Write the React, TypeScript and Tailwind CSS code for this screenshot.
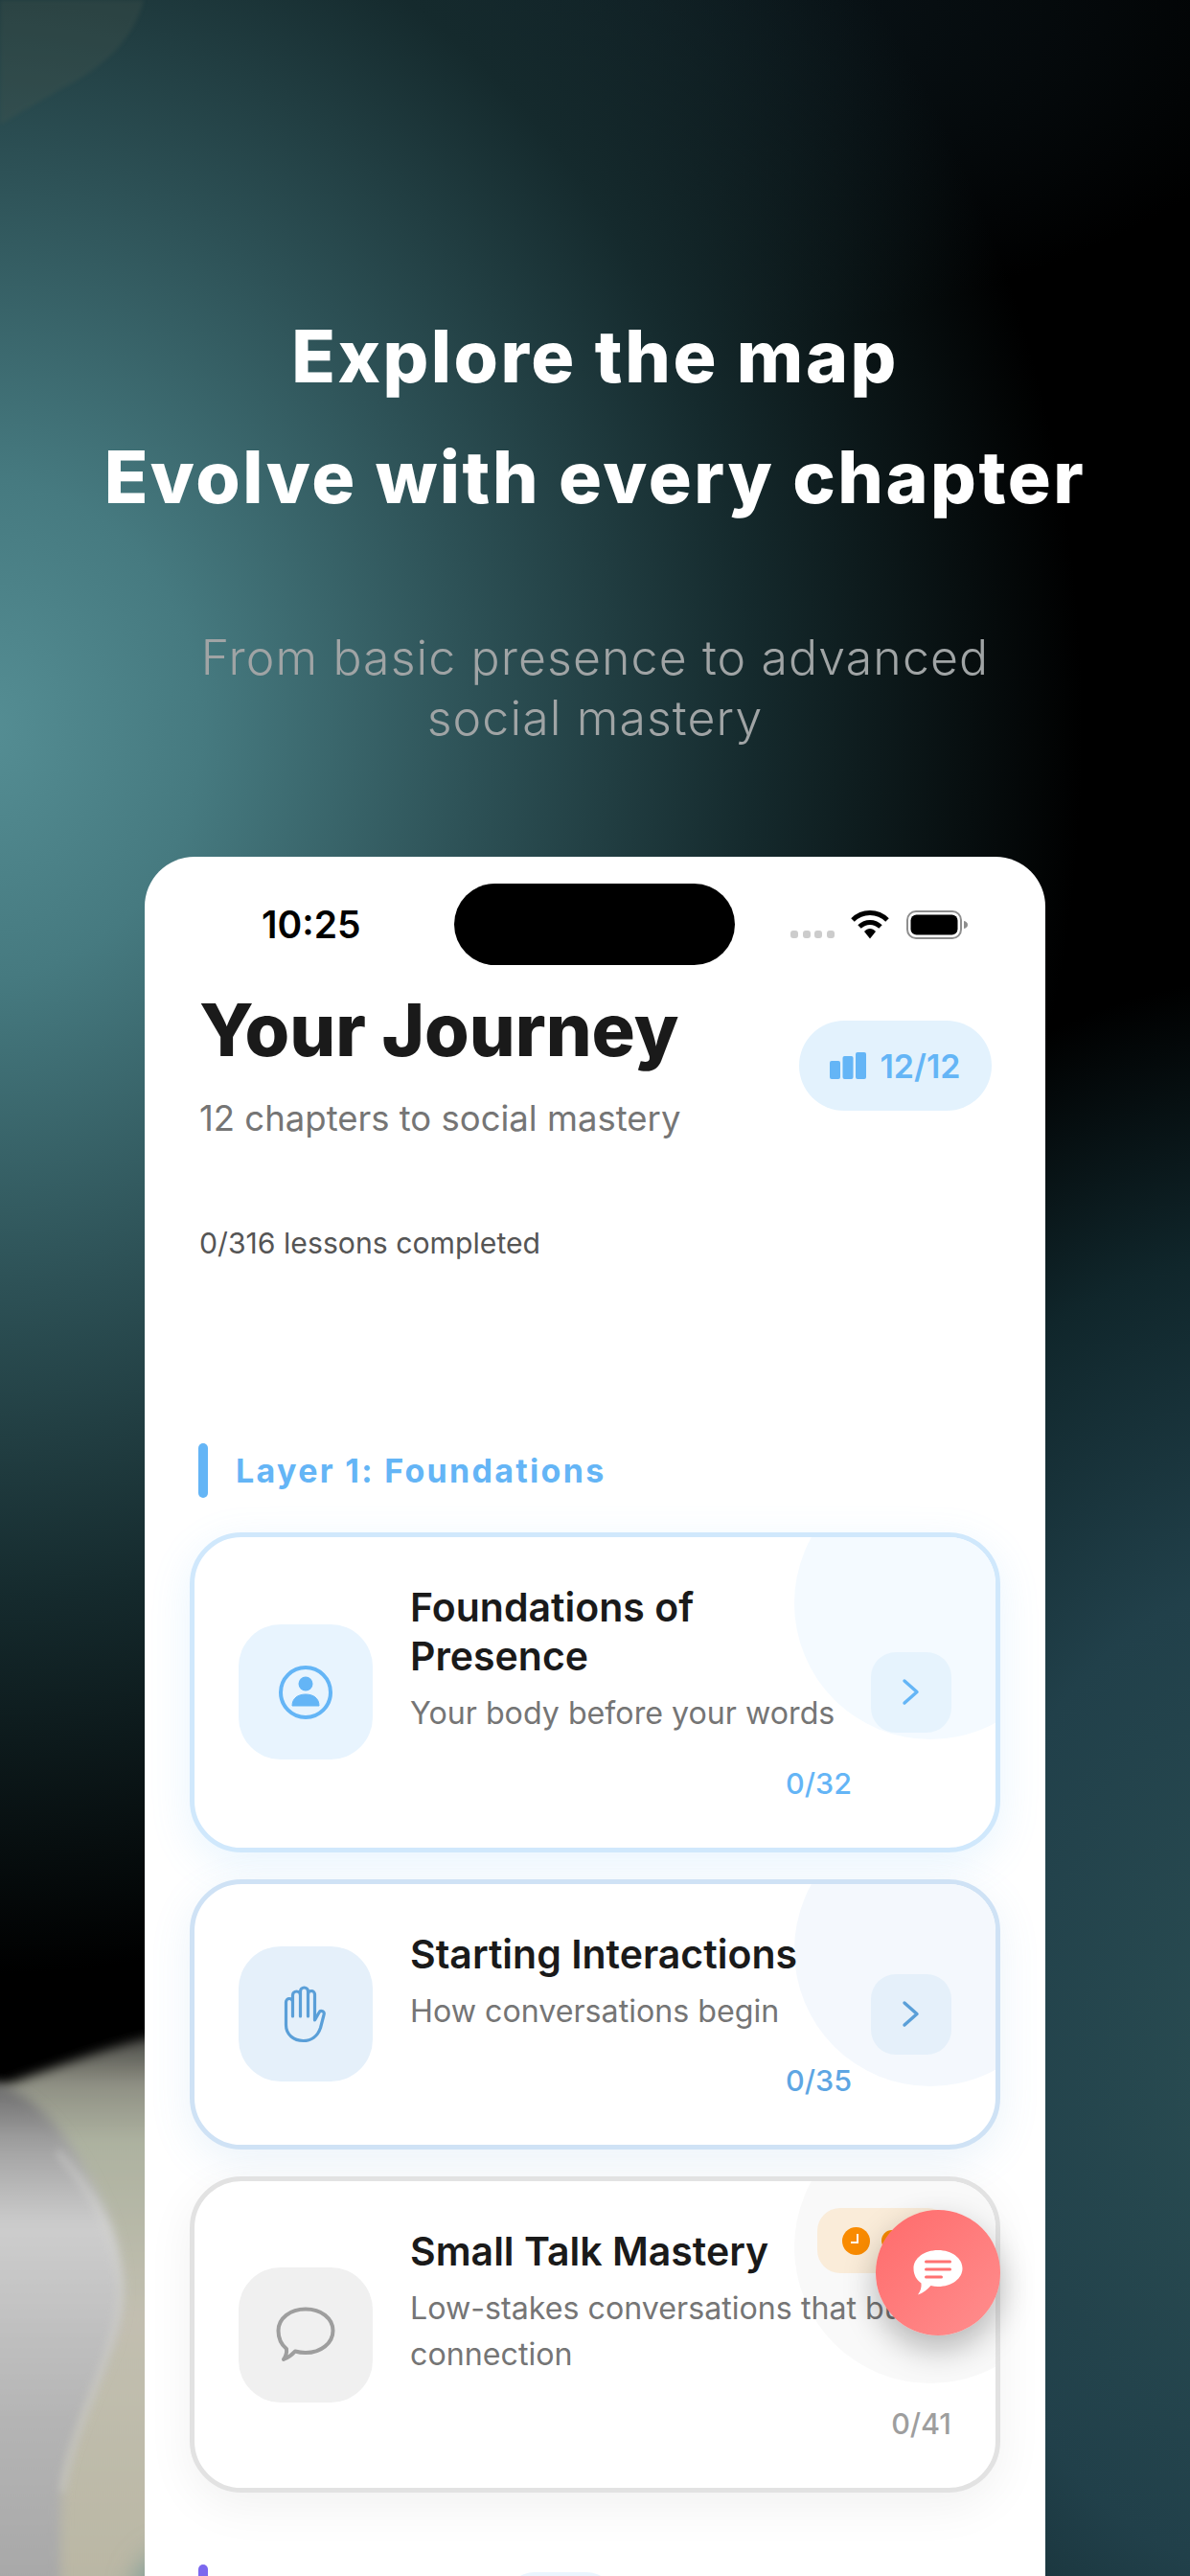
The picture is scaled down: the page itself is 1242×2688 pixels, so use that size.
import React from "react";

const Person = () => (
  <svg width="60" height="60" viewBox="0 0 60 60">
    <circle cx="30" cy="30" r="26" fill="none" stroke="#64b5f6" strokeWidth="4" />
    <circle cx="30" cy="21" r="7.5" fill="#64b5f6" />
    <path d="M16 44c0-8 6-12 14-12s14 4 14 12z" fill="#64b5f6" strokeLinejoin="round" stroke="#64b5f6" strokeWidth="1" />
  </svg>
);

const HandIcon = () => (
  <svg width="49" height="62" viewBox="0 0 49 62">
    <g transform="translate(1.5 2)" fill="none" stroke="#5a9fd8" strokeWidth="3.2" strokeLinecap="round" strokeLinejoin="round">
      <path d="M2 40V16a3.5 3.5 0 0 1 7 0V9a4 4 0 0 1 8 0V5a4 4 0 0 1 8 0V8a3.5 3.5 0 0 1 7 0V35l4.5-8c1.6-3 6.6-1 5 2.5L38 43C35 52 28 56.5 20 56.5 10 56.5 2 50 2 40z" />
      <path d="M9 16V31M17 9V31M25 8V31" />
    </g>
  </svg>
);

const Bubble = () => (
  <svg width="62" height="58" viewBox="0 0 62 58">
    <path d="M11 44C5 39 2.500 32 2.500 25 2.500 12 15 2.500 31 2.500S59.500 12 59.500 25 47 48 31 48C27 48 23.500 47.500 20 46.500 17 50 13 53 8 55 10.500 51.500 11.500 48 11 44z" fill="none" stroke="#9e9e9e" strokeWidth="4" strokeLinejoin="round" />
  </svg>
);

const Chevron = ({ color }: { color: string }) => (
  <svg width="20" height="29" viewBox="0 0 20 29">
    <path d="M3 3l13 11.500L3 26" fill="none" stroke={color} strokeWidth="3.4" strokeLinecap="round" strokeLinejoin="round" />
  </svg>
);

function Background() {
  return (
    <svg className="absolute inset-0" width="1242" height="2688" viewBox="0 0 1242 2688">
      <defs>
        <filter id="b14" x="-40%" y="-40%" width="180%" height="180%"><feGaussianBlur stdDeviation="14" /></filter>
        <filter id="b7" x="-40%" y="-40%" width="180%" height="180%"><feGaussianBlur stdDeviation="6" /></filter>
        <filter id="b2" x="-20%" y="-20%" width="140%" height="140%"><feGaussianBlur stdDeviation="2" /></filter>
        <filter id="b4" x="-40%" y="-20%" width="180%" height="140%"><feGaussianBlur stdDeviation="4" /></filter>
        <linearGradient id="gr" x1="0" y1="0" x2="0" y2="1">
          <stop offset="0" stopColor="#666666" />
          <stop offset="0.12" stopColor="#a0a0a0" />
          <stop offset="0.28" stopColor="#cdcdcd" />
          <stop offset="0.65" stopColor="#b4b4b4" />
          <stop offset="1" stopColor="#a6a6a6" />
        </linearGradient>
        <linearGradient id="be" x1="0" y1="0" x2="0" y2="1">
          <stop offset="0" stopColor="#3a3a38" />
          <stop offset="0.1" stopColor="#8f9084" />
          <stop offset="0.2" stopColor="#adb2a0" />
          <stop offset="0.5" stopColor="#c2bfb0" />
          <stop offset="1" stopColor="#b9b6a3" />
        </linearGradient>
      </defs>
      <path d="M0 0H150C140 40 110 70 60 95L0 130z" fill="#46564e" opacity="0.3" filter="url(#b2)" />
      <path d="M-40 2190C30 2170 90 2140 200 2115V2720H-40z" fill="url(#be)" filter="url(#b7)" />
      <path d="M-30 2170C30 2170 70 2225 95 2275 120 2320 135 2370 125 2420 115 2470 75 2530 65 2600 62 2640 65 2670 62 2720H-30z" fill="url(#gr)" filter="url(#b7)" />
      <path d="M60 2245C85 2275 120 2320 125 2390 125 2450 75 2530 65 2600" fill="none" stroke="#d9d9d6" strokeWidth="6" filter="url(#b4)" opacity="0.45" />
      <circle cx="185" cy="2705" r="45" fill="#7f9e98" filter="url(#b14)" />
    </svg>
  );
}

type CardProps = {
  icon: React.ReactNode;
  title: string;
  desc: string;
  count: string;
  chevron?: string;
  border: string;
  shadow: string;
  circle: string;
  tile: string;
  countColor: string;
  arrowTile?: string;
  badge?: boolean;
};

function Card(p: CardProps) {
  return (
    <div className={`relative rounded-[54px] border-[5px] bg-white ${p.border} ${p.shadow}`}>
      <div className="absolute inset-0 overflow-hidden rounded-[49px]">
        <div className={`absolute -top-[73px] -right-[74px] h-[284px] w-[284px] rounded-full ${p.circle}`} />
      </div>
      {p.badge && (
        <div className="absolute top-[28px] right-[47px] flex h-[68px] w-[139px] items-center gap-[12px] rounded-[24px] bg-[#faecd9] pl-[26px]">
          <svg width="29" height="29" viewBox="0 0 29 29">
            <circle cx="14.500" cy="14.500" r="14.500" fill="#f98b00" />
            <path d="M16 7v9H9" fill="none" stroke="#fff" strokeWidth="2" />
          </svg>
          <div className="h-[22px] w-[22px] rounded-full bg-[#f98b00]" />
        </div>
      )}
      <div className="relative flex items-center py-[48px] pr-[46px] pl-[46px]">
        <div className={`flex h-[141px] w-[140px] shrink-0 items-center justify-center rounded-[44px] ${p.tile}`}>{p.icon}</div>
        <div className="ml-[39px] flex min-w-0 flex-1 flex-col">
          <div className="text-[41px] leading-[51px] font-semibold text-[#1a1a1a]">{p.title}</div>
          <div className="mt-[10px] text-[32.200px] leading-[47.500px] text-[#757575]">{p.desc}</div>
          <div className={`mt-[30px] text-right text-[30.500px] leading-[38px] font-medium ${p.countColor}`}>{p.count}</div>
        </div>
        {p.chevron && (
          <div className={`ml-[20px] flex h-[84px] w-[84px] shrink-0 items-center justify-center rounded-[26px] ${p.arrowTile}`}>
            <Chevron color={p.chevron} />
          </div>
        )}
      </div>
    </div>
  );
}

export default function App() {
  return (
    <div className="relative h-[2688px] w-[1242px] overflow-hidden bg-black bg-[radial-gradient(ellipse_1150px_1300px_at_-20px_760px,#558e94_0%,#467a80_20%,#2d5156_45%,#152a2d_70%,transparent_100%),radial-gradient(ellipse_1100px_400px_at_300px_0px,#12242c_0%,transparent_100%),radial-gradient(ellipse_760px_1150px_at_1330px_2170px,#2a4d52_0%,#21404a_45%,#10262b_75%,transparent_100%),linear-gradient(to_top,#1b3644_0%,transparent_5%)] [font-family:Inter,sans-serif]">
      <Background />
      <div className="relative flex flex-col items-center pt-[309px]">
        <h1 className="text-center text-[75px] leading-[126px] font-extrabold tracking-[2.500px] text-white">
          <div>Explore the map</div>
          <div>Evolve with every chapter</div>
        </h1>
        <p className="mt-[94px] text-center text-[50px] leading-[63px] font-light tracking-[1.100px] text-[#a0a4a5]">
          From basic presence to advanced
          <br />
          social mastery
        </p>
        <div className="relative mt-[113px] h-[1795px] w-[940px] overflow-hidden rounded-t-[52px] bg-white">
          <div className="flex items-center pt-[28px] pl-[122px]">
            <div className="w-[201px] text-[39px] leading-[85px] font-semibold text-black">10:25</div>
            <div className="h-[85px] w-[293px] rounded-full bg-black" />
            <div className="ml-[58px] flex h-[30px] items-center">
              <div className="mt-[20px] flex gap-[4.500px]">
                <div className="h-[8px] w-[8px] rounded-[3px] bg-[#cccccc]" />
                <div className="h-[8px] w-[8px] rounded-[3px] bg-[#cccccc]" />
                <div className="h-[8px] w-[8px] rounded-[3px] bg-[#cccccc]" />
                <div className="h-[8px] w-[8px] rounded-[3px] bg-[#cccccc]" />
              </div>
              <svg className="ml-[17px]" width="40" height="30" viewBox="0 0 40 30">
                <path d="M2 10C12 0 28 0 38 10" fill="none" stroke="#000" strokeWidth="5" />
                <path d="M9 17c6.500-6 15.500-6 22 0" fill="none" stroke="#000" strokeWidth="5" />
                <path d="M14 22c3.500-4 8.500-4 12 0l-6 7.500z" fill="#000" />
              </svg>
              <svg className="ml-[18px]" width="65" height="30" viewBox="0 0 65 30">
                <rect x="1" y="1" width="56" height="28" rx="9" fill="none" stroke="#8e8e8e" strokeWidth="2" />
                <rect x="4.500" y="4.500" width="49" height="21" rx="6" fill="#000" />
                <path d="M60 11c2.500.5 4 2 4 4s-1.500 3.500-4 4z" fill="#8e8e8e" />
              </svg>
            </div>
          </div>

          <div className="flex items-start justify-between pt-[28px] pr-[56px] pl-[57px]">
            <div>
              <div className="text-[75.500px] leading-[80px] font-extrabold text-[#1a1a1a]">Your Journey</div>
              <div className="mt-[30px] text-[36.500px] leading-[44px] text-[#757575]">12 chapters to social mastery</div>
            </div>
            <div className="mt-[30px] flex h-[94px] w-[201px] items-center justify-center gap-[14px] rounded-full bg-[#e3f2fd]">
              <svg width="38" height="28" viewBox="0 0 38 28">
                <rect x="0" y="9" width="11" height="19" rx="2" fill="#64b5f6" />
                <rect x="13.500" y="4" width="11" height="24" rx="2" fill="#64b5f6" />
                <rect x="27" y="0" width="11" height="28" rx="2" fill="#64b5f6" />
              </svg>
              <span className="text-[34px] font-semibold text-[#64b5f6]">12/12</span>
            </div>
          </div>

          <div className="mt-[88px] pl-[57px] text-[30.200px] leading-[40px] text-[#555555]">0/316 lessons completed</div>

          <div className="mt-[189px] flex items-center pl-[56px]">
            <div className="h-[57px] w-[10px] rounded-full bg-[#64b5f6]" />
            <div className="ml-[29px] text-[34px] font-bold tracking-[2.300px] text-[#64b5f6]">Layer 1: Foundations</div>
          </div>

          <div className="mt-[36px] flex flex-col gap-[28px] px-[47px]">
            <Card
              icon={<Person />}
              title="Foundations of Presence"
              desc="Your body before your words"
              count="0/32"
              chevron="#64b5f6"
              border="border-[#d0e8fc]"
              shadow="shadow-[0_12px_44px_rgba(100,181,246,0.14)]"
              circle="bg-[#f4faff]"
              tile="bg-[#e8f4fe]"
              arrowTile="bg-[#e6f3fd]"
              countColor="text-[#64b5f6]"
            />
            <Card
              icon={<HandIcon />}
              title="Starting Interactions"
              desc="How conversations begin"
              count="0/35"
              chevron="#5a9fd8"
              border="border-[#cfe2f5]"
              shadow="shadow-[0_12px_44px_rgba(90,159,216,0.12)]"
              circle="bg-[#f4f8fd]"
              tile="bg-[#e5f0fa]"
              arrowTile="bg-[#e5f0fa]"
              countColor="text-[#5ea6e3]"
            />
            <Card
              icon={<Bubble />}
              title="Small Talk Mastery"
              desc="Low-stakes conversations that build connection"
              count="0/41"
              border="border-[#e2e2e2]"
              shadow="shadow-[0_14px_50px_rgba(0,0,0,0.06)]"
              circle="bg-[#f9f9f9]"
              tile="bg-[#f0f0f0]"
              countColor="text-[#9e9e9e]"
              badge
            />
          </div>

          <div className="relative mt-[72px] flex items-start pl-[56px]">
            <div className="mt-[3px] h-[40px] w-[10px] rounded-full bg-[#7b68ee]" />
            <div className="ml-[8px] flex h-[60px] w-[790px] justify-center rounded-t-[50px] bg-white pt-[11px]">
              <div className="-ml-[70px] h-[40px] w-[114px] rounded-t-[30px] bg-[#eaf5fe]" />
            </div>
          </div>

          <div className="absolute top-[1412px] right-[47px] flex h-[131px] w-[130px] items-center justify-center rounded-full bg-[linear-gradient(135deg,#ff6b6b,#ff8e8e)] shadow-[0_14px_34px_rgba(0,0,0,0.28)]">
            <svg width="52" height="50" viewBox="0 0 52 50">
              <path d="M26 1C40.500 1 51.500 9.500 51.500 20S40.500 39 26 39C23.500 39 21 38.700 18.500 38.100 15 42.500 10 46 5 47.500 7.500 44 9 40 8.500 35.500 3.500 32 .5 26.500 .5 20 .5 9.500 11.500 1 26 1z" fill="#fff" />
              <rect x="12" y="11.500" width="28" height="3" rx="1.500" fill="#ff7272" />
              <rect x="12" y="19.500" width="28" height="3" rx="1.500" fill="#ff7272" />
              <rect x="12" y="27.500" width="19" height="3" rx="1.500" fill="#ff7272" />
            </svg>
          </div>
        </div>
      </div>
    </div>
  );
}
